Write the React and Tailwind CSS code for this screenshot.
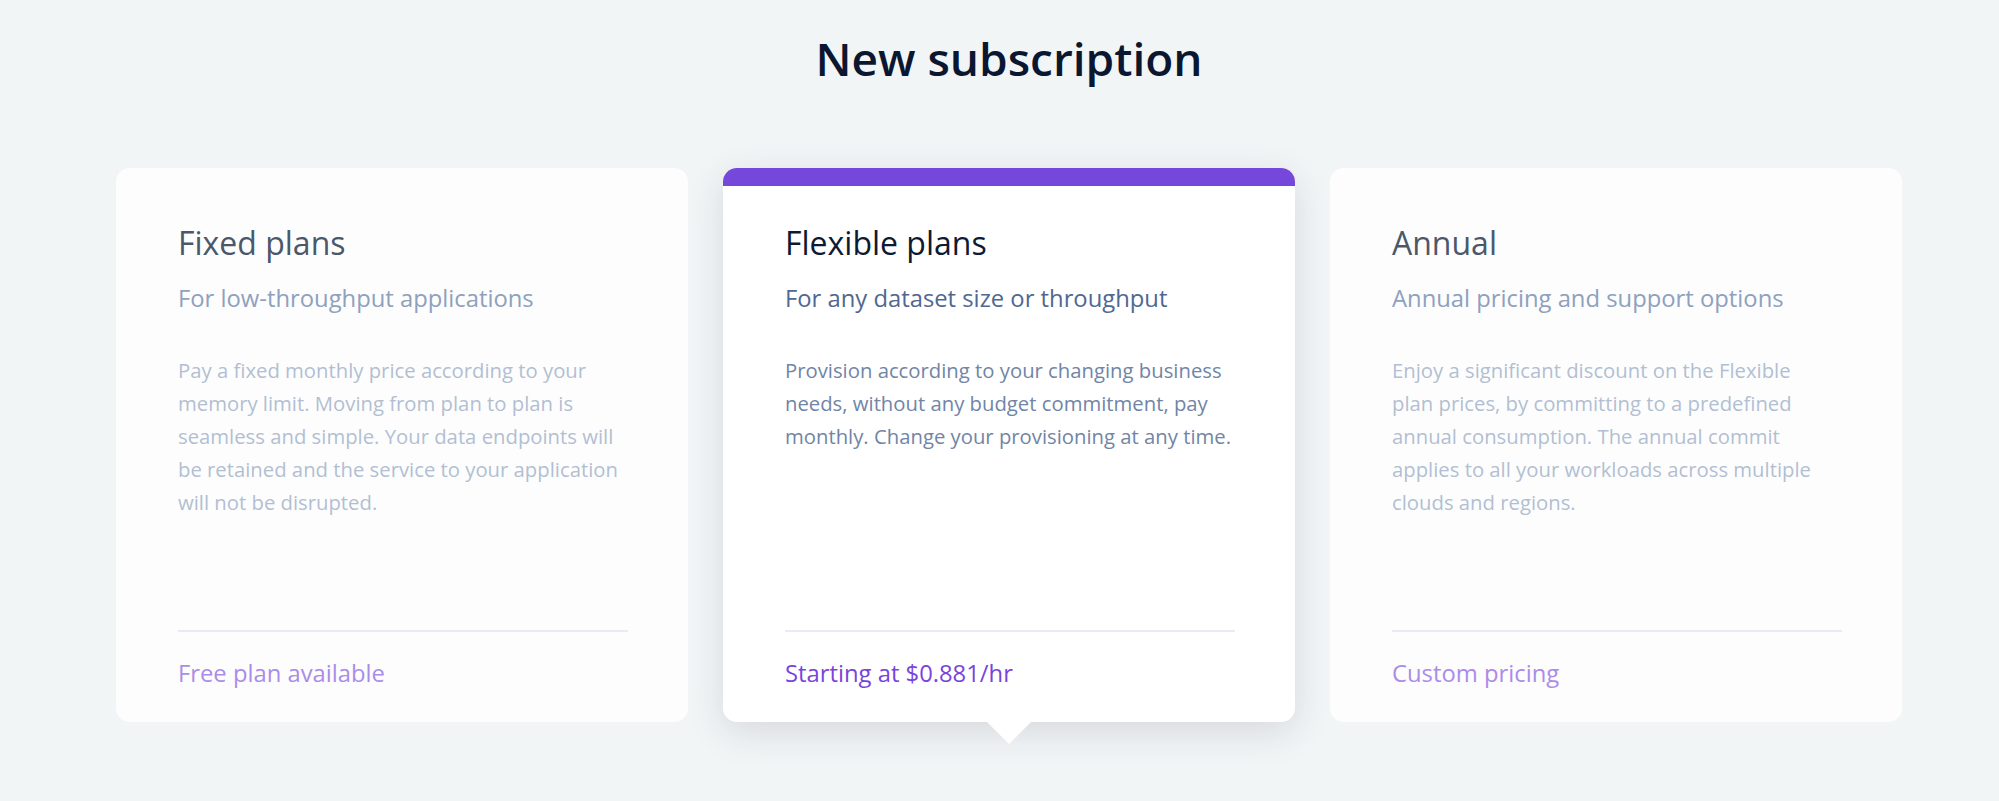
import React from 'react';

const plans = [
  {
    key: 'fixed',
    title: 'Fixed plans',
    subtitle: 'For low-throughput applications',
    lines: [
      'Pay a fixed monthly price according to your',
      'memory limit. Moving from plan to plan is',
      'seamless and simple. Your data endpoints will',
      'be retained and the service to your application',
      'will not be disrupted.',
    ],
    footer: 'Free plan available',
  },
  {
    key: 'flexible',
    title: 'Flexible plans',
    subtitle: 'For any dataset size or throughput',
    lines: [
      'Provision according to your changing business',
      'needs, without any budget commitment, pay',
      'monthly. Change your provisioning at any time.',
    ],
    footer: 'Starting at $0.881/hr',
    active: true,
  },
  {
    key: 'annual',
    title: 'Annual',
    subtitle: 'Annual pricing and support options',
    lines: [
      'Enjoy a significant discount on the Flexible',
      'plan prices, by committing to a predefined',
      'annual consumption. The annual commit',
      'applies to all your workloads across multiple',
      'clouds and regions.',
    ],
    footer: 'Custom pricing',
  },
];

function PlanCard({ plan }) {
  const on = plan.active;
  return (
    <div
      className={`relative w-[572px] h-[554px] rounded-[14px] flex flex-col ${
        on ? 'bg-white shadow-[0_10px_36px_rgba(30,40,60,0.13)] z-10' : 'bg-[#fdfdfe]'
      }`}
    >
      {/* top accent */}
      <div className={`h-[18px] rounded-t-[14px] ${on ? 'bg-[#7647db]' : 'bg-transparent'}`}></div>

      <div className="flex-1 flex flex-col pl-[62px] pr-[60px] pt-[35px] pb-[33px]">
        <h2 className={`text-[32px] leading-[44px] ${on ? 'text-[#0c1a33]' : 'text-[#4b586a]'}`}>
          {plan.title}
        </h2>
        <p className={`mt-[17px] text-[23.8px] leading-[32px] font-medium ${on ? 'text-[#4f6891]' : 'text-[#8ea1bd]'}`}>
          {plan.subtitle}
        </p>
        <div className={`mt-[40px] flex-1 text-[20.3px] leading-[33px] ${on ? 'text-[#7185a6]' : 'text-[#b2bfd2]'}`}>
          {plan.lines.map((l, i) => (
            <div key={i} className="whitespace-nowrap">{l}</div>
          ))}
        </div>
        <div className="h-[2px] bg-[#e8ecf2]"></div>
        <p className={`mt-[25px] text-[23.8px] leading-[32px] font-medium ${on ? 'text-[#7845dc]' : 'text-[#ab8ce9]'}`}>
          {plan.footer}
        </p>
      </div>

      {on && (
        <div className="absolute left-1/2 -translate-x-1/2 top-full w-0 h-0 border-l-[22px] border-r-[22px] border-t-[22px] border-l-transparent border-r-transparent border-t-white"></div>
      )}
    </div>
  );
}

export default function App() {
  return (
    <div
      className="w-[1999px] h-[801px] bg-[#f2f5f6] overflow-hidden"
      style={{ fontFamily: '"Open Sans", Lato, sans-serif' }}
    >
      <div className="ml-[116px] w-[1786px]">
        <h1 className="pt-[30px] text-center text-[46px] leading-[56px] font-semibold text-[#0b1730]">
          New subscription
        </h1>
        <div className="mt-[82px] flex gap-[35px]">
          {plans.map(p => (
            <PlanCard key={p.key} plan={p} />
          ))}
        </div>
      </div>
    </div>
  );
}
